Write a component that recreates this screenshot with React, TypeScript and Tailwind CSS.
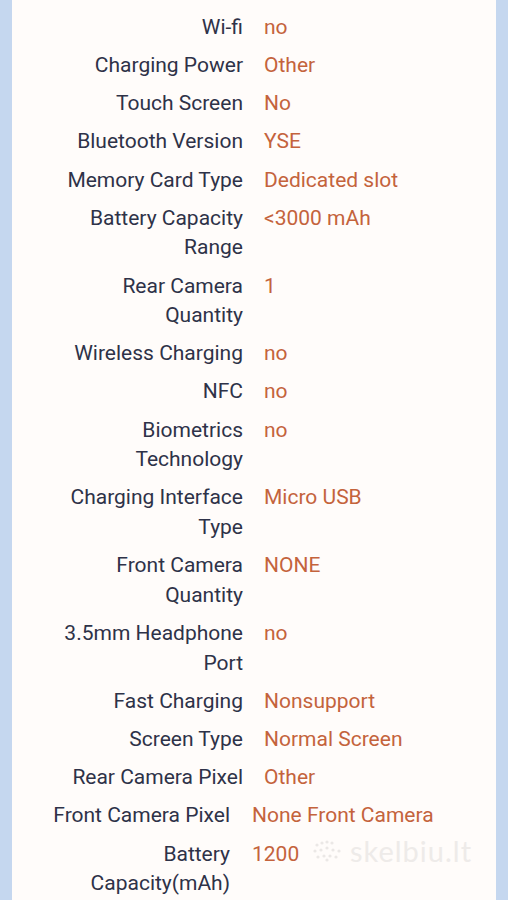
import React from 'react';

const groupOne = [
  { label: 'Wi-fi', value: 'no' },
  { label: 'Charging Power', value: 'Other' },
  { label: 'Touch Screen', value: 'No' },
  { label: 'Bluetooth Version', value: 'YSE' },
  { label: 'Memory Card Type', value: 'Dedicated slot' },
  { label: 'Battery Capacity Range', value: '<3000 mAh' },
  { label: 'Rear Camera Quantity', value: '1' },
  { label: 'Wireless Charging', value: 'no' },
  { label: 'NFC', value: 'no' },
  { label: 'Biometrics Technology', value: 'no' },
  { label: 'Charging Interface Type', value: 'Micro USB' },
  { label: 'Front Camera Quantity', value: 'NONE' },
  { label: '3.5mm Headphone Port', value: 'no' },
  { label: 'Fast Charging', value: 'Nonsupport' },
  { label: 'Screen Type', value: 'Normal Screen' },
  { label: 'Rear Camera Pixel', value: 'Other' },
];

const groupTwo = [
  { label: 'Front Camera Pixel', value: 'None Front Camera' },
  { label: 'Battery Capacity(mAh)', value: '1200' },
];

function SpecRow({ label, value, wide }: { label: string; value: string; wide?: boolean }) {
  return (
    <div className={`flex py-[4.3px] leading-[29.6px] ${wide ? 'gap-[22px]' : 'gap-[21px]'}`}>
      <div
        className={`shrink-0 text-right text-[#2e3248] ${
          wide ? 'w-[218px] pl-[38px]' : 'w-[231px] pl-[46px]'
        }`}
      >
        {label}
      </div>
      <div className="text-[#c4633c]">{value}</div>
    </div>
  );
}

function Watermark() {
  return (
    <div className="absolute left-[312px] top-[836px] flex items-center gap-[8px] text-[#eeebe9] select-none">
      <svg width="30" height="24" viewBox="0 0 30 24" fill="#ebe8e6">
        <circle cx="5" cy="6" r="1.6" />
        <circle cx="10" cy="4" r="1.6" />
        <circle cx="15" cy="3" r="1.6" />
        <circle cx="20" cy="4" r="1.6" />
        <circle cx="3" cy="12" r="1.6" />
        <circle cx="9" cy="11" r="1.6" />
        <circle cx="15" cy="9" r="1.6" />
        <circle cx="21" cy="11" r="1.6" />
        <circle cx="27" cy="12" r="1.6" />
        <circle cx="6" cy="18" r="1.6" />
        <circle cx="12" cy="17" r="1.6" />
        <circle cx="18" cy="17" r="1.6" />
        <circle cx="24" cy="18" r="1.6" />
        <circle cx="15" cy="21" r="1.6" />
      </svg>
      <span className="text-[29px] leading-none tracking-[1px]" style={{ fontFamily: 'Lato, sans-serif' }}>
        skelbiu.lt
      </span>
    </div>
  );
}

export default function App() {
  return (
    <div className="relative h-[900px] overflow-hidden bg-[#c5d7ef] px-[12px]" style={{ fontFamily: 'Roboto, sans-serif' }}>
      <div className="h-full bg-[#fffcfa] pt-[8.5px] text-[21px]">
        {groupOne.map((row) => (
          <SpecRow key={row.label} label={row.label} value={row.value} />
        ))}
        {groupTwo.map((row) => (
          <SpecRow key={row.label} label={row.label} value={row.value} wide />
        ))}
      </div>
      <Watermark />
    </div>
  );
}
